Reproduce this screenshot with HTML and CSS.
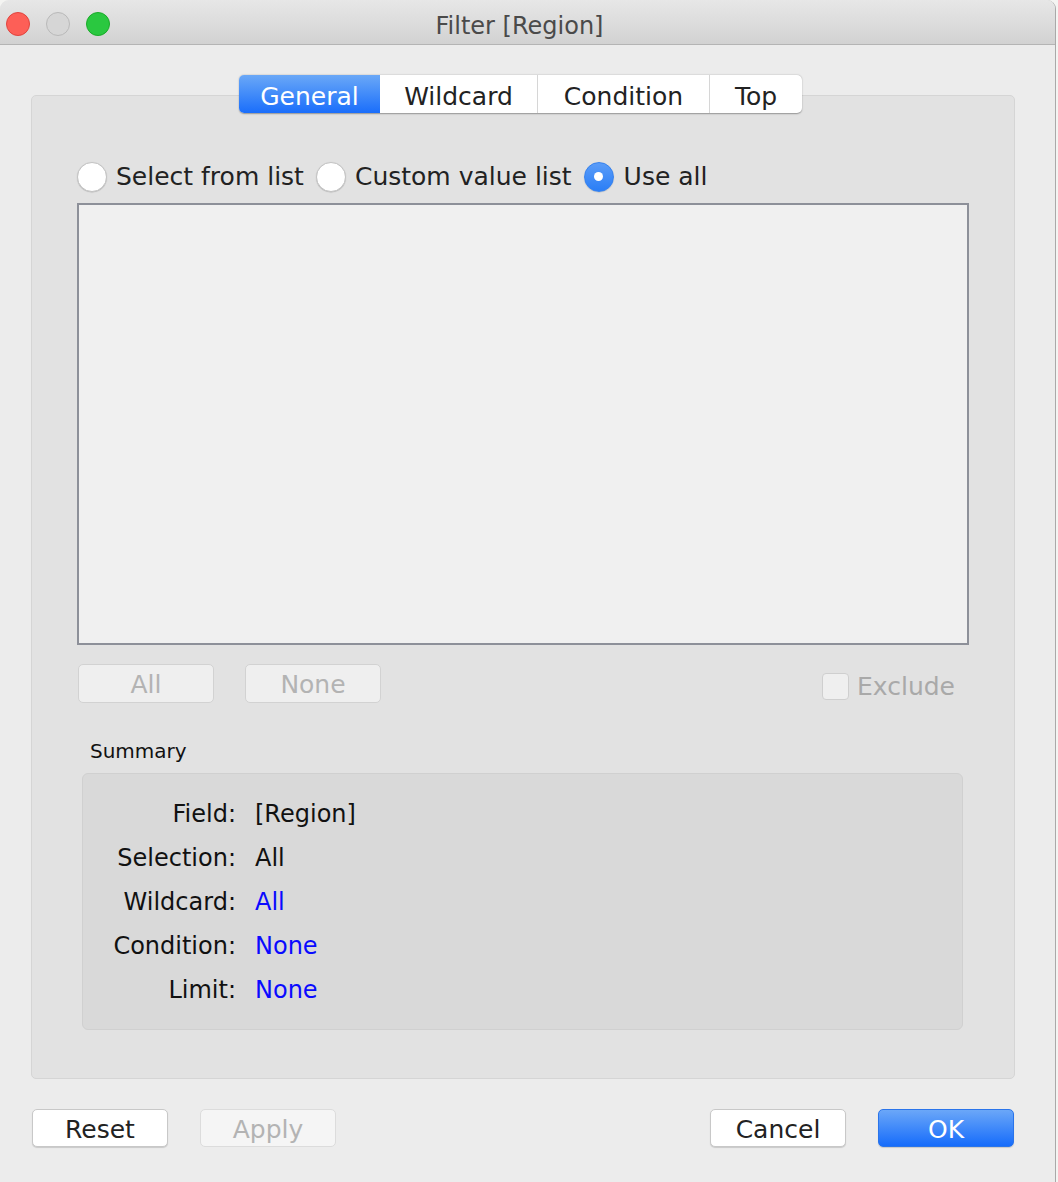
FILE: index.html
```html
<!DOCTYPE html>
<html>
<head>
<meta charset="utf-8">
<title>Filter [Region]</title>
<link rel="stylesheet" href="styles.css">
</head>
<body>
<div class="window">
  <div class="titlebar">
    <div class="lights">
      <span class="light red"></span>
      <span class="light gray"></span>
      <span class="light green"></span>
    </div>
    <div class="title">Filter [Region]</div>
  </div>
  <div class="content">
    <div class="panel">
      <div class="tabs">
        <div class="tab active">General</div>
        <div class="tab">Wildcard</div>
        <div class="tab">Condition</div>
        <div class="tab">Top</div>
      </div>
      <div class="radios">
        <label class="radio"><span class="circle"></span>Select from list</label>
        <label class="radio"><span class="circle"></span>Custom value list</label>
        <label class="radio"><span class="circle on"></span>Use all</label>
      </div>
      <div class="listbox"></div>
      <div class="listactions">
        <div class="btn disabled small">All</div>
        <div class="btn disabled small">None</div>
        <div class="spacer"></div>
        <label class="check"><span class="box"></span>Exclude</label>
      </div>
      <div class="summary-label">Summary</div>
      <div class="summary">
        <div class="k">Field:</div><div class="v">[Region]</div>
        <div class="k">Selection:</div><div class="v">All</div>
        <div class="k">Wildcard:</div><div class="v link">All</div>
        <div class="k">Condition:</div><div class="v link">None</div>
        <div class="k">Limit:</div><div class="v link">None</div>
      </div>
    </div>
    <div class="footer">
      <div class="btn">Reset</div>
      <div class="btn disabled light-dis">Apply</div>
      <div class="spacer"></div>
      <div class="btn">Cancel</div>
      <div class="btn primary">OK</div>
    </div>
  </div>
</div>
</body>
</html>
```
FILE: styles.css
```css
html, body {
  margin: 0;
  padding: 0;
  background: #f4f4f2;
}
body {
  font-family: "DejaVu Sans", "Noto Sans", sans-serif;
  color: #222;
}
.window {
  width: 1055px;
  height: 1182px;
  background: #ececec;
  border-right: 1px solid #a9a9a9;
  border-top-right-radius: 9px;
  border-top-left-radius: 9px;
  overflow: hidden;
}
.titlebar {
  height: 44px;
  border-bottom: 1px solid #b4b4b4;
  background: linear-gradient(#e7e7e7, #d2d2d2);
  display: flex;
  align-items: center;
  position: relative;
}
.lights {
  display: flex;
  gap: 16px;
  padding-left: 6px;
  margin-top: 3px;
}
.light {
  width: 22px;
  height: 22px;
  border-radius: 50%;
  display: block;
}
.light.red { background: #fd5f57; border: 1px solid #e0443e; }
.light.gray { background: #d6d6d6; border: 1px solid #b9b9b9; }
.light.green { background: #2ac840; border: 1px solid #1aab29; }
.title {
  position: absolute;
  left: 0;
  right: 16px;
  text-align: center;
  font-size: 24px;
  color: #4a4a4a;
  top: 12px;
}
.content {
  padding: 50px 40px 0 31px;
}
.panel {
  width: 984px;
  height: 984px;
  box-sizing: border-box;
  background: #e2e2e2;
  border: 1px solid #d5d5d5;
  border-radius: 5px;
  padding: 0 45px 0 45px;
  display: flex;
  flex-direction: column;
}
.tabs {
  align-self: center;
  margin-top: -21px;
  margin-left: -5px;
  display: flex;
  height: 38px;
  background: #fff;
  border-radius: 5px;
  box-shadow: 0 0.5px 1.5px rgba(0,0,0,0.35);
  font-size: 25px;
}
.tab {
  display: flex;
  align-items: center;
  justify-content: center;
  color: #222;
  border-left: 1px solid #d6d6d6;
  padding-top: 4px;
  box-sizing: border-box;
}
.tab:nth-child(1) { width: 141px; border-left: none; }
.tab:nth-child(2) { width: 157px; border-left: none; }
.tab:nth-child(3) { width: 172px; }
.tab:nth-child(4) { width: 93px; }
.tab.active {
  color: #fff;
  background: linear-gradient(#6aa8f7, #1a6efb);
  border-radius: 5px 0 0 5px;
}
.radios {
  margin-top: 48px;
  display: flex;
  align-items: center;
  font-size: 25px;
  height: 31px;
}
.radio {
  display: flex;
  align-items: center;
  margin-right: 12px;
}
.circle {
  width: 30px;
  height: 30px;
  box-sizing: border-box;
  border-radius: 50%;
  background: #fff;
  border: 1px solid #c3c3c3;
  box-shadow: 0 0.5px 1px rgba(0,0,0,0.2);
  margin-right: 9px;
  display: flex;
  align-items: center;
  justify-content: center;
}
.circle.on {
  background: linear-gradient(#5a9cf8, #2a7ef6);
  border-color: #3682ee;
  margin-right: 10px;
}
.circle.on::after {
  content: "";
  width: 9px;
  height: 9px;
  border-radius: 50%;
  background: #fff;
}
.listbox {
  margin-top: 11px;
  height: 442px;
  box-sizing: border-box;
  border: 2px solid #8d9099;
  background: #f0f0f0;
}
.listactions {
  margin-top: 18px;
  display: flex;
  align-items: center;
  gap: 31px;
  height: 40px;
  padding-left: 1px;
}
.spacer { flex: 1; }
.btn {
  width: 136px;
  height: 38px;
  box-sizing: border-box;
  border-radius: 5px;
  background: #fff;
  border: 1px solid #c8c8c8;
  box-shadow: 0 1px 1px rgba(0,0,0,0.15);
  display: flex;
  align-items: center;
  justify-content: center;
  font-size: 25px;
  color: #222;
  padding-top: 3px;
}
.btn.disabled {
  background: #efefef;
  border-color: #d2d2d2;
  color: #b3b3b3;
  box-shadow: none;
}
.btn.light-dis {
  background: #f5f5f5;
  border-color: #dcdcdc;
}
.btn.small { height: 39px; padding-top: 2px; }
.btn.primary {
  background: linear-gradient(#6ba7f8, #166cfb);
  border-color: #2a74ea;
  color: #fff;
}
.check {
  display: flex;
  align-items: center;
  font-size: 25px;
  color: #a9a9a9;
  margin-right: 14px;
  margin-top: 7px;
}
.box {
  width: 27px;
  height: 27px;
  box-sizing: border-box;
  border: 1px solid #cfcfcf;
  border-radius: 4px;
  background: #efefef;
  margin-right: 8px;
}
.summary-label {
  margin-top: 36px;
  margin-left: 13px;
  font-size: 20px;
  color: #111;
  line-height: 24px;
}
.summary {
  margin: 10px 6px 0 5px;
  height: 257px;
  box-sizing: border-box;
  background: #d9d9d9;
  border: 1px solid #d0d0d0;
  border-radius: 6px;
  padding-top: 18px;
  display: grid;
  grid-template-columns: 153px 1fr;
  column-gap: 19px;
  grid-auto-rows: 44px;
  font-size: 24px;
  align-items: center;
}
.k {
  text-align: right;
  color: #111;
}
.v { color: #111; }
.v.link { color: #0a0aff; }
.footer {
  margin-top: 30px;
  display: flex;
  align-items: center;
  gap: 32px;
  width: 983px;
  padding-left: 1px;
  box-sizing: border-box;
}
```
